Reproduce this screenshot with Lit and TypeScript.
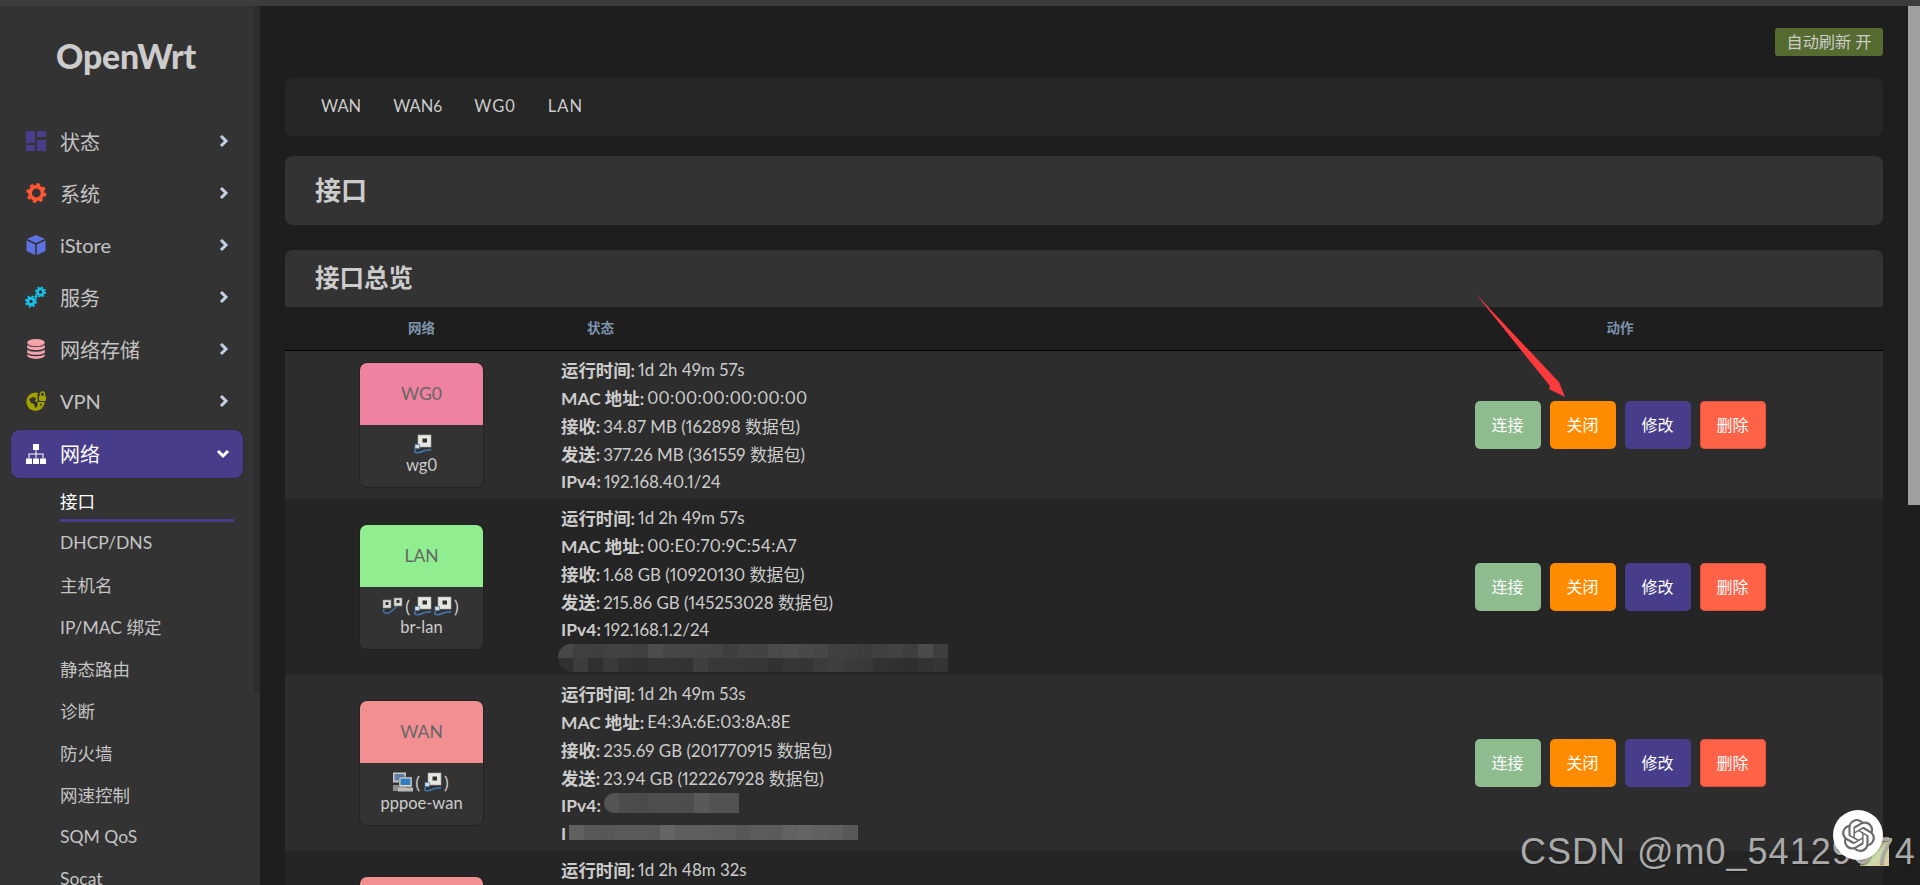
import { LitElement, html, css } from "lit";
import { customElement } from "lit/decorators.js";

const chevR = html`<svg class="chev" viewBox="0 0 10 14"><path d="M2 2l5 5-5 5" fill="none" stroke="#c6d2e2" stroke-width="3"/></svg>`;
const chevD = html`<svg class="chev" viewBox="0 0 14 10"><path d="M2 2l5 5 5-5" fill="none" stroke="#fff" stroke-width="3"/></svg>`;

const gear = (cx: number, cy: number, r: number, c: string, w: number) => {
  const outer = r + w * 0.62;
  const circ = 2 * Math.PI * outer;
  return html`<svg x="0" y="0" width="20" height="20" viewBox="0 0 20 20" overflow="visible">
    <circle cx=${cx} cy=${cy} r=${r} fill="none" stroke=${c} stroke-width=${w}/>
    <circle cx=${cx} cy=${cy} r=${outer} fill="none" stroke=${c} stroke-width=${w * 0.7} stroke-dasharray="${circ / 16} ${circ / 16}"/>
  </svg>`;
};

const icons: Record<string, unknown> = {
  dash: html`<svg class="ic" viewBox="0 0 20 20" fill="#483d8b"><rect x="0" y="0" width="9" height="12"/><rect x="0" y="14" width="9" height="6"/><rect x="11" y="0" width="9" height="6"/><rect x="11" y="9" width="9" height="11"/></svg>`,
  gear: html`<svg class="ic" viewBox="0 0 20 20">${gear(10.3, 10, 6.3, "#ff5733", 3.8)}</svg>`,
  cube: html`<svg class="ic" viewBox="0 0 20 20"><path d="M10 0l9 4-9 4-9-4z" fill="#5f72e4"/><path d="M0.5 5.5l8.7 3.9V20L0.5 16z" fill="#5f72e4"/><path d="M19.5 5.5l-8.7 3.9V20l8.7-4z" fill="#5f72e4"/></svg>`,
  cogs: html`<svg class="ic" viewBox="0 0 20 20">${gear(14.5, 5, 3.1, "#17c1e8", 2.6)}${gear(5, 14.5, 3.2, "#17c1e8", 3)}<circle cx="10" cy="9.500" r="1.600" fill="#17c1e8"/></svg>`,
  db: html`<svg class="ic" viewBox="0 0 20 20"><ellipse cx="10" cy="3.6" rx="8.8" ry="3.6" fill="#f4a3ae"/><path d="M1.2 5.8c2 3 15.600 3 17.600 0v3c-2 3.200-15.600 3.200-17.600 0z" fill="#f4a3ae"/><path d="M1.2 10.400c2 3 15.600 3 17.600 0v3c-2 3.200-15.600 3.200-17.600 0z" fill="#f4a3ae"/><path d="M1.200 15c2 3 15.600 3 17.600 0v1.600c-1 4.400-16.600 4.400-17.600 0z" fill="#f4a3ae"/></svg>`,
  vpn: html`<svg class="ic" viewBox="0 0 20 20"><circle cx="9.500" cy="10.800" r="9.200" fill="#a3a300"/><path d="M3 8l4-2 3 1-1 3 3 2-1 4-2 1-1-4-3-1zM14 13l2-1-1 4z" fill="#333"/><rect x="11.500" y="2.500" width="9" height="8.500" fill="#333"/><rect x="13" y="4.500" width="7" height="5.500" rx="1" fill="#a3a300"/><path d="M14.500 4.500V3a2 2 0 0 1 4 0v1.500" fill="none" stroke="#a3a300" stroke-width="1.300"/></svg>`,
  net: html`<svg class="ic" viewBox="0 0 20 20" fill="#fff"><rect x="7" y="0" width="6" height="6"/><rect x="0" y="14.500" width="6" height="5.500"/><rect x="7" y="14.500" width="6" height="5.500"/><rect x="14" y="14.500" width="6" height="5.500"/><path d="M9.500 6h1v3.500H17.500v5h-1v-4H10.500v4h-1v-4H3.500v4h-1v-5H9.500z"/></svg>`,
};

const port = html`<svg class="eth" width="20" height="20" viewBox="0 0 20 20">
  <rect x="6" y="1" width="13" height="12" fill="#e6e6e2" stroke="#a9a9a4" stroke-width=".6"/>
  <rect x="10.500" y="4.500" width="4.500" height="4" fill="#2e2e2a"/>
  <rect x="3" y="10.500" width="4.500" height="4" fill="#ddd" stroke="#4f7cb2" stroke-width=".7"/>
  <path d="M4 15C0 19 6 19.500 10 17.500S17 16.500 19 15.500" fill="none" stroke="#4477b0" stroke-width="1.500"/>
</svg>`;

const bridge = html`<svg class="eth" width="21" height="18" viewBox="0 0 21 18">
  <rect x="1" y="3" width="8" height="8" fill="#d8d8d4" stroke="#8a8a86" stroke-width=".6"/><rect x="3.500" y="5" width="3" height="3" fill="#333"/>
  <rect x="12" y="1" width="8" height="8" fill="#d8d8d4" stroke="#8a8a86" stroke-width=".6"/><rect x="14.500" y="3" width="3" height="3" fill="#333"/>
  <path d="M2 12C0 17 6 17 9 14.500S14 11 14 9" fill="none" stroke="#4477b0" stroke-width="1.400"/>
</svg>`;

const pppoe = html`<svg class="eth" width="21" height="20" viewBox="0 0 21 20">
  <rect x="1" y="0.500" width="13" height="10" fill="#c8c8c4"/><rect x="2.500" y="2" width="10" height="6.500" fill="#5d7fa8"/>
  <rect x="1" y="13" width="13" height="6" fill="#8d8d8a"/>
  <rect x="7" y="5" width="13" height="10" fill="#d4d4d0" stroke="#444" stroke-width=".5"/><rect x="8.500" y="6.500" width="10" height="6.500" fill="#2f7fc1"/>
  <rect x="6" y="15.500" width="15" height="4" fill="#b9b9b5"/>
</svg>`;

const paren = (c: string) => html`<span class="paren">${c}</span>`;

type Act = { t: string; c: string };
const actions: Act[] = [
  { t: "连接", c: "go" },
  { t: "关闭", c: "stop" },
  { t: "修改", c: "edit" },
  { t: "删除", c: "del" },
];

const shades = [78, 86, 66, 60, 74, 58, 70, 62, 80, 64, 56, 72, 84, 68, 60, 76, 88, 64, 70, 58, 82, 66, 62, 74, 68, 60];

const pixels = (cols: number, rows: number, size: number, h: number, cls: string, base: number) => html`
  <span class="pix ${cls}" style="grid-template-columns:repeat(${cols},${size}px);grid-auto-rows:${h}px">
    ${Array.from({ length: cols * rows }, (_, i) => {
      const row = Math.floor(i / cols);
      const v = Math.round(base + (shades[(i * 7 + row * 5) % shades.length] - 70) * 0.5 - row * 14);
      return html`<i style="background:rgb(${v},${v},${v})"></i>`;
    })}
  </span>`;

type Row = {
  label: string;
  name: string;
  color: string;
  icon: unknown;
  lines: unknown[];
};

const kv = (k: string, v: unknown, cls = "") => html`<div class="line"><b>${k}</b><span class=${cls}>${v}</span></div>`;

const rows: Row[] = [
  {
    label: "WG0",
    name: "wg0",
    color: "#ee82a0",
    icon: html`${port}`,
    lines: [
      kv("运行时间:", "1d 2h 49m 57s"),
      kv("MAC 地址:", "00:00:00:00:00:00", "wide"),
      kv("接收:", "34.87 MB (162898 数据包)"),
      kv("发送:", "377.26 MB (361559 数据包)"),
      kv("IPv4:", "192.168.40.1/24"),
    ],
  },
  {
    label: "LAN",
    name: "br-lan",
    color: "#90ee90",
    icon: html`${bridge}${paren("(")}${port}${port}${paren(")")}`,
    lines: [
      kv("运行时间:", "1d 2h 49m 57s"),
      kv("MAC 地址:", "00:E0:70:9C:54:A7", "mid"),
      kv("接收:", "1.68 GB (10920130 数据包)"),
      kv("发送:", "215.86 GB (145253028 数据包)"),
      kv("IPv4:", "192.168.1.2/24"),
      html`<div class="line">${pixels(26, 2, 15, 14, "blur-a", 68)}</div>`,
    ],
  },
  {
    label: "WAN",
    name: "pppoe-wan",
    color: "#f28f92",
    icon: html`${pppoe}${paren("(")}${port}${paren(")")}`,
    lines: [
      kv("运行时间:", "1d 2h 49m 53s"),
      kv("MAC 地址:", "E4:3A:6E:03:8A:8E"),
      kv("接收:", "235.69 GB (201770915 数据包)"),
      kv("发送:", "23.94 GB (122267928 数据包)"),
      html`<div class="line"><b>IPv4:</b>${pixels(9, 1, 15, 20, "blur-b", 80)}</div>`,
      html`<div class="line"><b>I</b>${pixels(19, 1, 15.200, 15, "blur-c", 92)}</div>`,
    ],
  },
  {
    label: "WAN6",
    name: "pppoe-wan",
    color: "#f28f92",
    icon: html`${pppoe}${paren("(")}${port}${paren(")")}`,
    lines: [kv("运行时间:", "1d 2h 48m 32s")],
  },
];

const nav = [
  { t: "状态", i: "dash" },
  { t: "系统", i: "gear" },
  { t: "iStore", i: "cube" },
  { t: "服务", i: "cogs" },
  { t: "网络存储", i: "db" },
  { t: "VPN", i: "vpn" },
];
const subs = ["接口", "DHCP/DNS", "主机名", "IP/MAC 绑定", "静态路由", "诊断", "防火墙", "网速控制", "SQM QoS", "Socat"];

@customElement("app-root")
export class AppRoot extends LitElement {
  static styles = css`
    :host {
      display: block;
      position: relative;
      width: 1920px;
      height: 885px;
      overflow: hidden;
      background: #1e1e1e;
      color: #ccc;
      font-family: "Lato", "Noto Sans CJK SC", sans-serif;
    }
    * { box-sizing: border-box; }
    .strip { height: 6px; background: #3c3c3c; }
    .app { display: flex; height: 879px; }

    .side { width: 260px; flex: none; background: #333; display: flex; overflow: hidden; }
    .side-in { width: 254px; flex: none; }
    .side-thumb { width: 6px; height: 686px; background: #2c2c2c; }
    .logo {
      height: 110px;
      padding: 30px 0 0 56px;
      font-size: 33.800px;
      line-height: 40px;
      font-weight: 900;
      color: #ccc;
      letter-spacing: -0.2px;
    }
    .wrap { height: 52px; padding: 1px 10px; }
    .item {
      height: 50px;
      padding: 0 16px 2px;
      display: flex;
      align-items: center;
      font-size: 20px;
      border-radius: 10px;
      color: #c4c4c4;
    }
    .item.on { background: #483d8b; color: #fff; border: 1px solid #2c2c2c; padding: 0 15px 1px; }
    .ic { width: 20px; height: 20px; flex: none; margin-right: 14px; overflow: visible; }
    .item .lbl { flex: 1; }
    .chev { width: 10px; height: 14px; flex: none; margin-right: -1px; }
    .item.on .chev { width: 14px; height: 10px; margin-right: -2px; }
    .sub {
      height: 42px;
      margin: 0 20px 0 60px;
      display: flex;
      align-items: center;
      font-size: 17.500px;
      color: #c4c4c4;
      border-bottom: 3px solid transparent;
      padding-top: 2px;
    }
    .sub.on { color: #fff; border-bottom-color: #483d8b; }

    .main { flex: 1; min-width: 0; padding: 22px 25px 0; overflow: hidden; }
    .refresh { display: flex; justify-content: flex-end; }
    .badge {
      width: 108px;
      height: 28px;
      background: #556b2f;
      border-radius: 3px;
      font-size: 16.200px;
      line-height: 27px;
      text-align: center;
      color: #ccc;
    }
    .tabs {
      margin-top: 22px;
      height: 58px;
      background: #262626;
      border-radius: 8px;
      display: flex;
      align-items: center;
      padding: 0 0 2px 36px;
      gap: 32px;
      font-size: 16.500px;
      color: #ccc;
    }
    .old { font-variant-numeric: oldstyle-nums; }
    .sp { letter-spacing: 1px; }
    .title {
      margin-top: 20px;
      height: 69px;
      background: #333;
      border-radius: 8px;
      padding: 0 0 5px 30px;
      display: flex;
      align-items: center;
      font-size: 26px;
      font-weight: 700;
    }
    .card { margin-top: 25px; background: #333; border-radius: 8px 8px 0 0; }
    .card h3 {
      margin: 0;
      height: 57px;
      padding: 0 0 4px 30px;
      display: flex;
      align-items: center;
      font-size: 24.500px;
      font-weight: 700;
    }
    .thead, .tr { display: grid; grid-template-columns: 273px 799px 526px; }
    .thead {
      height: 44px;
      background: #1e1e1e;
      border-bottom: 1px solid #000;
      padding-bottom: 4px;
      font-size: 13.500px;
      font-weight: 700;
      color: #7d93ad;
      align-items: center;
    }
    .thead .c { text-align: center; }
    .thead .s { padding-left: 29px; }
    .tr { background: #2d2d2d; }
    .tr:nth-child(even) { background: #252525; }
    .cell-net { display: flex; align-items: center; justify-content: center; }
    .iface {
      width: 125px;
      height: 126px;
      border-radius: 8px;
      background: #333;
      border: 1px solid #222;
      display: flex;
      flex-direction: column;
      align-items: center;
    }
    .iface .hd {
      align-self: stretch;
      height: 62px;
      flex: none;
      border-radius: 7px 7px 0 0;
      padding-bottom: 2px;
      display: flex;
      align-items: center;
      justify-content: center;
      font-size: 17.500px;
      color: #666;
    }
    .iface .icons { display: flex; align-items: center; justify-content: center; height: 22px; margin-top: 8px; gap: 0; }
    .paren { font-size: 18px; color: #ccc; margin: 0 2px; }
    .eth { flex: none; }
    .iface .nm { font-size: 16.500px; line-height: 22px; color: #ccc; margin-top: -1px; }
    .cell-st { padding: 4px 0 4px 3px; font-size: 16.900px; font-variant-numeric: proportional-nums; }
    .line { display: flex; align-items: center; height: 28px; gap: 3px; white-space: nowrap; }
    .line b { font-weight: 700; font-size: 17.400px; color: #ccc; }
    .wide { letter-spacing: 0.35px; }
    .mid { letter-spacing: 0.3px; }
    .pix { display: grid; overflow: hidden; flex: none; }
    .pix i { display: block; }
    .blur-a { margin: 2px 0 0 -3px; border-radius: 14px 0 0 16px; }
    .blur-b { margin: -4px 0 0 0; border-radius: 10px 0 0 10px; }
    .blur-c { margin: -1px 0 0 0; }
    .cell-ac { display: flex; align-items: center; justify-content: center; gap: 9px; }
    .btn {
      width: 66px;
      height: 48px;
      border-radius: 5px;
      display: flex;
      align-items: center;
      justify-content: center;
      color: #fff;
      font-size: 16px;
      padding-bottom: 2px;
    }
    .go { background: #8fbc8f; }
    .stop { background: #ff8c00; }
    .edit { background: #483d8b; }
    .del { background: #ff6347; box-shadow: inset 0 0 0 1px #e0503a; }

    .vbar { width: 12px; flex: none; }
    .vbar div { height: 499px; background: #a0a0a0; }

    .arrow { position: absolute; left: 1470px; top: 290px; width: 100px; height: 110px; }
    .thumb {
      position: absolute;
      left: 1860px;
      top: 837px;
      width: 29px;
      height: 29px;
      background: linear-gradient(135deg, #9a6e6e 0%, #7f5a58 35%, #c9dba8 60%, #e5c9a0 100%);
    }
    .gpt {
      position: absolute;
      left: 1833px;
      top: 810px;
      width: 50px;
      height: 50px;
      border-radius: 50%;
      background: #fff;
      display: flex;
      align-items: center;
      justify-content: center;
    }
    .gpt svg { width: 33px; height: 33px; }
    .wm {
      position: absolute;
      left: 1520px;
      top: 831px;
      font-family: "Liberation Sans", sans-serif;
      font-size: 36px;
      line-height: 42px;
      letter-spacing: 1px;
      color: #aaa;
      white-space: nowrap;
      text-shadow: 0 1px 1px rgba(0, 0, 0, 0.35);
    }
  `;

  render() {
    return html`
      <div class="strip"></div>
      <div class="app">
        <aside class="side">
          <div class="side-in">
            <div class="logo">OpenWrt</div>
            ${nav.map(
              (n) => html`<div class="wrap"><div class="item">${icons[n.i]}<span class="lbl">${n.t}</span>${chevR}</div></div>`
            )}
            <div class="wrap"><div class="item on">${icons.net}<span class="lbl">网络</span>${chevD}</div></div>
            ${subs.map((s, i) => html`<div class="sub ${i === 0 ? "on" : ""}">${s}</div>`)}
          </div>
          <div class="side-thumb"></div>
        </aside>
        <main class="main">
          <div class="refresh"><div class="badge">自动刷新 开</div></div>
          <nav class="tabs"><span>WAN</span><span class="old">WAN6</span><span class="sp">WG0</span><span class="sp">LAN</span></nav>
          <div class="title">接口</div>
          <section class="card">
            <h3>接口总览</h3>
            <div class="thead"><div class="c">网络</div><div class="s">状态</div><div class="c">动作</div></div>
            <div class="tbody">
              ${rows.map(
                (r) => html`<div class="tr">
                  <div class="cell-net">
                    <div class="iface">
                      <div class="hd" style="background:${r.color}">${r.label}</div>
                      <div class="icons">${r.icon}</div>
                      <div class="nm">${r.name}</div>
                    </div>
                  </div>
                  <div class="cell-st" style="min-height:${r.lines.length === 5 ? 148 : 176}px">${r.lines}</div>
                  <div class="cell-ac">${actions.map((a) => html`<div class="btn ${a.c}">${a.t}</div>`)}</div>
                </div>`
              )}
            </div>
          </section>
        </main>
        <div class="vbar"><div></div></div>
      </div>
      <svg class="arrow" viewBox="1470 290 100 110"><polygon points="1475,293 1556,379 1559,382 1565,397 1549,389 1550,386" fill="#fb3a3d"/></svg>
      <div class="thumb"></div>
      <div class="wm">CSDN @m0_54129074</div>
      <div class="gpt"><svg viewBox="0 0 24 24" fill="#6b6b6b"><path d="M22.2819 9.8211a5.9847 5.9847 0 0 0-.5157-4.9108 6.0462 6.0462 0 0 0-6.5098-2.9A6.0651 6.0651 0 0 0 4.9807 4.1818a5.9847 5.9847 0 0 0-3.9977 2.9 6.0462 6.0462 0 0 0 .7427 7.0966 5.98 5.98 0 0 0 .511 4.9107 6.051 6.051 0 0 0 6.5146 2.9001A5.9847 5.9847 0 0 0 13.2599 24a6.0557 6.0557 0 0 0 5.7718-4.2058 5.9894 5.9894 0 0 0 3.9977-2.9001 6.0557 6.0557 0 0 0-.7475-7.0729zm-9.022 12.6081a4.4755 4.4755 0 0 1-2.8764-1.0408l.1419-.0804 4.7783-2.7582a.7948.7948 0 0 0 .3927-.6813v-6.7369l2.02 1.1686a.071.071 0 0 1 .038.052v5.5826a4.504 4.504 0 0 1-4.4945 4.4944zm-9.6607-4.1254a4.4708 4.4708 0 0 1-.5346-3.0137l.142.0852 4.783 2.7582a.7712.7712 0 0 0 .7806 0l5.8428-3.3685v2.3324a.0804.0804 0 0 1-.0332.0615L9.74 19.9502a4.4992 4.4992 0 0 1-6.1408-1.6464zM2.3408 7.8956a4.485 4.485 0 0 1 2.3655-1.9728V11.6a.7664.7664 0 0 0 .3879.6765l5.8144 3.3543-2.0201 1.1685a.0757.0757 0 0 1-.071 0l-4.8303-2.7865A4.504 4.504 0 0 1 2.3408 7.872zm16.5963 3.8558L13.1038 8.364 15.1192 7.2a.0757.0757 0 0 1 .071 0l4.8303 2.7913a4.4944 4.4944 0 0 1-.6765 8.1042v-5.6772a.79.79 0 0 0-.407-.667zm2.0107-3.0231l-.142-.0852-4.7735-2.7818a.7759.7759 0 0 0-.7854 0L9.409 9.2297V6.8974a.0662.0662 0 0 1 .0284-.0615l4.8303-2.7866a4.4992 4.4992 0 0 1 6.6802 4.66zM8.3065 12.863l-2.02-1.1638a.0804.0804 0 0 1-.038-.0567V6.0742a4.4992 4.4992 0 0 1 7.3757-3.4537l-.142.0805L8.704 5.459a.7948.7948 0 0 0-.3927.6813zm1.0976-2.3654l2.602-1.4998 2.6069 1.4998v2.9994l-2.5974 1.5-2.6067-1.4997Z"/></svg></div>
    `;
  }
}
